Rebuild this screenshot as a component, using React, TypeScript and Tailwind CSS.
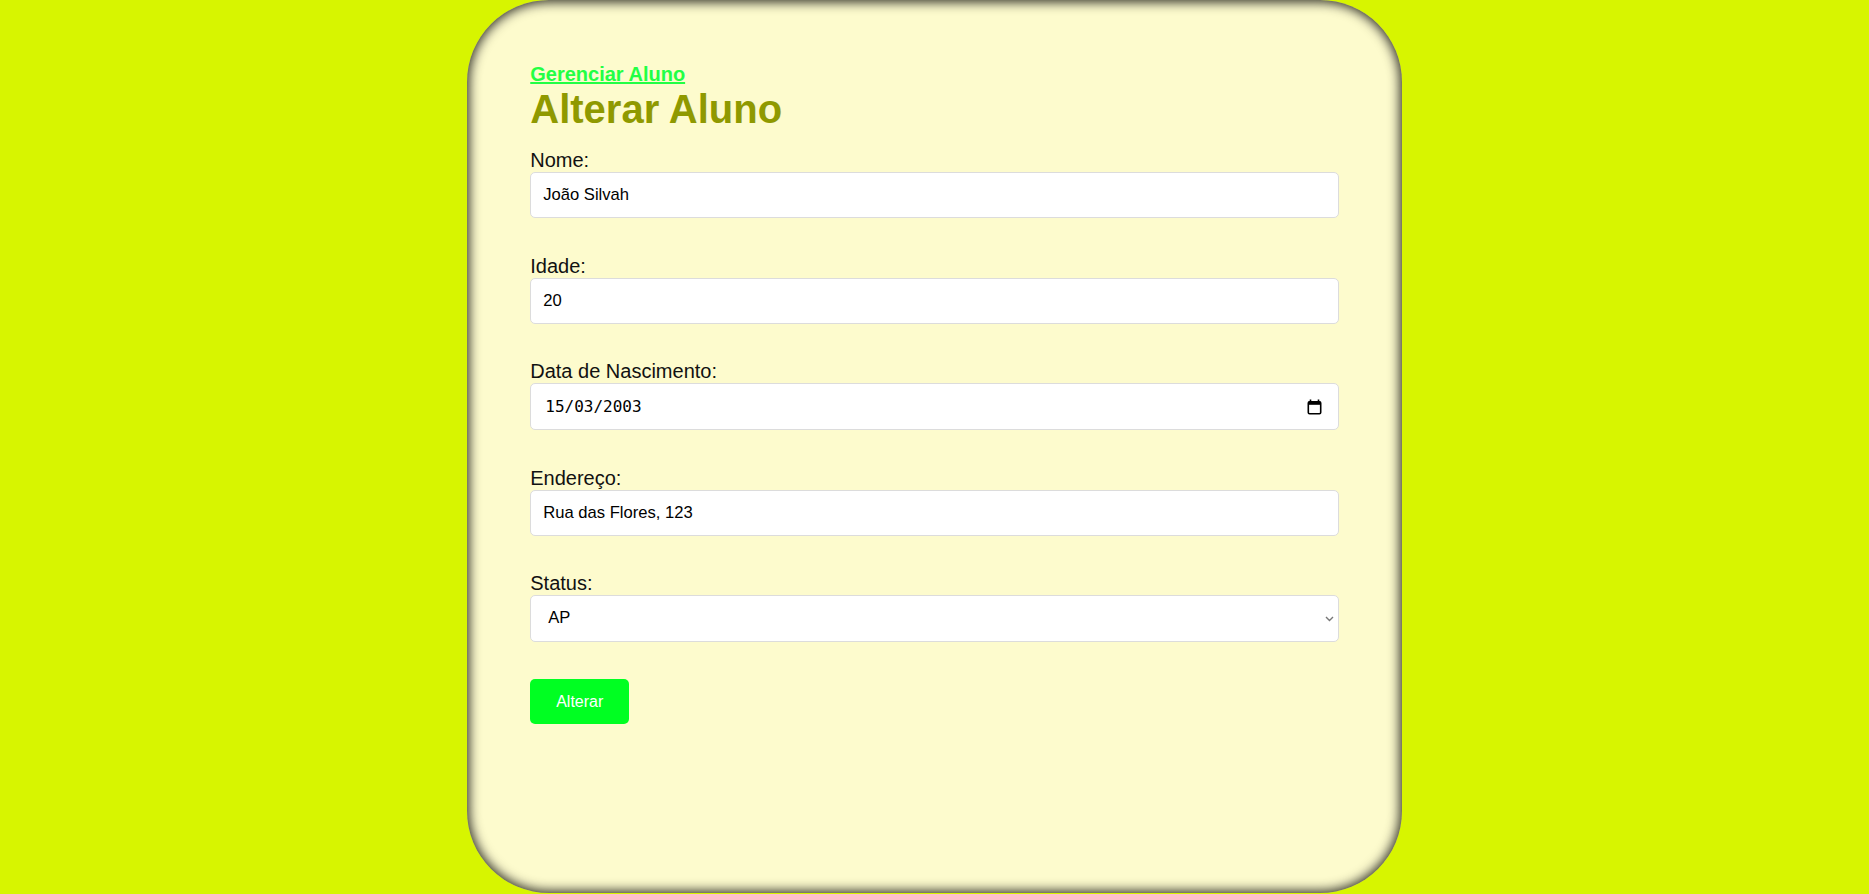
import React from "react";

type FieldProps = {
  label: string;
  children: React.ReactNode;
  last?: boolean;
};

function Field({ label, children, last }: FieldProps) {
  return (
    <div className={last ? "mb-[37px]" : "mb-[35.5px]"}>
      <label className="block text-[20px] leading-[24px] text-[#111]">
        {label}
      </label>
      {children}
    </div>
  );
}

const inputCls =
  "block w-full h-[46px] rounded-[5px] border border-[#dcdcdc] bg-white px-3 text-[16.6px] text-black outline-none";

function CalendarIcon() {
  return (
    <svg width="15" height="16" viewBox="0 0 15 16">
      <path d="M3.5 0.5v3M11.5 0.5v3" stroke="#000" strokeWidth="1.6" />
      <rect
        x="1.3"
        y="2.8"
        width="12.4"
        height="12"
        rx="1.2"
        fill="none"
        stroke="#000"
        strokeWidth="1.6"
      />
      <rect x="1.3" y="2.8" width="12.4" height="3" fill="#000" />
    </svg>
  );
}

export default function App() {
  return (
    <div className="h-[894px] bg-[#d7f500] flex justify-center font-['Liberation_Sans',Arial,sans-serif]">
      <div className="w-1/2 h-[893px] bg-[#fdfbcd] rounded-[82px] shadow-[inset_0_0_12px_2px_rgba(0,0,0,0.85)] px-[63px] pt-[63px]">
        <a
          href="#"
          className="block w-fit text-[20px] leading-[23px] font-bold underline text-[#22ff44]"
        >
          Gerenciar Aluno
        </a>
        <h1 className="text-[40px] leading-[46px] font-bold text-[#8f9900] mb-4">
          Alterar Aluno
        </h1>

        <form onSubmit={(e) => e.preventDefault()}>
          <Field label="Nome:">
            <input className={inputCls} defaultValue="João Silvah" />
          </Field>

          <Field label="Idade:">
            <input className={inputCls} defaultValue="20" />
          </Field>

          <Field label="Data de Nascimento:">
            <div className="flex items-center justify-between h-[47px] rounded-[5px] border border-[#dcdcdc] bg-white pl-[14px] pr-[16px]">
              <span className="font-['DejaVu_Sans_Mono',monospace] text-[16px] text-black">
                15/03/2003
              </span>
              <CalendarIcon />
            </div>
          </Field>

          <Field label="Endereço:">
            <input className={inputCls} defaultValue="Rua das Flores, 123" />
          </Field>

          <Field label="Status:" last>
            <div className="flex items-center justify-between h-[47px] rounded-[5px] border border-[#dcdcdc] bg-white pl-[17px] pr-[4px]">
              <span className="text-[16.6px] text-black">AP</span>
              <svg width="9" height="6" viewBox="0 0 9 6">
                <path
                  d="M1 1l3.5 3.5L8 1"
                  fill="none"
                  stroke="#777"
                  strokeWidth="1.4"
                />
              </svg>
            </div>
          </Field>

          <button
            type="submit"
            className="w-[99px] h-[45px] rounded-[5px] bg-[#00ff22] text-white text-[16px]"
          >
            Alterar
          </button>
        </form>
      </div>
    </div>
  );
}
